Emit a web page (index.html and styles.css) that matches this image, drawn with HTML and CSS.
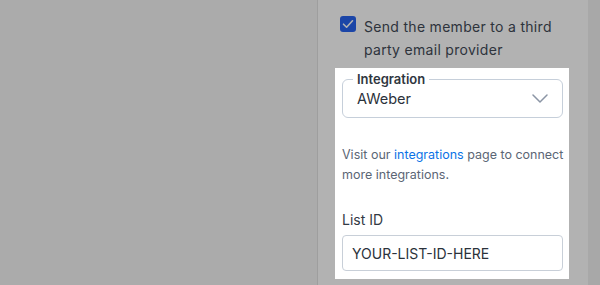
FILE: index.html
```html
<!DOCTYPE html>
<html>
<head>
<meta charset="utf-8">
<link rel="stylesheet" href="styles.css">
</head>
<body>
<div class="page">
  <div class="main"></div>
  <aside class="panel">
    <label class="check-row">
      <span class="checkbox">
        <svg width="12" height="10" viewBox="0 0 12 10"><path d="M1.5 5.2 L4.6 8.2 L10.5 1.8" fill="none" stroke="#fff" stroke-width="1.6" stroke-linecap="round" stroke-linejoin="round"/></svg>
      </span>
      <span class="check-text">Send the member to a third party email provider</span>
    </label>
    <div class="highlight">
      <fieldset class="select">
        <legend>Integration</legend>
        <div class="select-row">
          <span class="select-value">AWeber</span>
          <svg class="chev" width="16" height="9" viewBox="0 0 16 9"><path d="M1 1 L8 8 L15 1" fill="none" stroke="#8b95a5" stroke-width="1.5" stroke-linecap="round" stroke-linejoin="round"/></svg>
        </div>
      </fieldset>
      <p class="help">Visit our <a href="#">integrations</a> page to connect more integrations.</p>
      <div class="field-label">List ID</div>
      <div class="input">YOUR-LIST-ID-HERE</div>
    </div>
  </aside>
  <div class="scroll"></div>
</div>
</body>
</html>
```

FILE: styles.css
```css
html, body {
  margin: 0;
  padding: 0;
  height: 100%;
  overflow: hidden;
}
body {
  font-family: Inter, "Noto Sans", sans-serif;
  background: #f5f5f5;
}
.page {
  display: flex;
  height: 285px;
  position: relative;
}
.main {
  flex: 1;
  background: #f5f5f5;
}
.panel {
  width: 271px;
  background: #fff;
  border-left: 1px solid #e3e3e3;
  padding: 15px 0 0 0;
  box-sizing: border-box;
}
.scroll {
  width: 12px;
  background: #f1f1f1;
}
.check-row {
  display: flex;
  align-items: flex-start;
  gap: 8px;
  padding: 0 20px 0 22px;
}
.checkbox {
  flex: none;
  width: 16px;
  height: 16px;
  margin-top: 1px;
  border-radius: 3px;
  background: #2864f0;
  display: flex;
  align-items: center;
  justify-content: center;
}
.check-text {
  font-size: 14px;
  letter-spacing: 0.3px;
  line-height: 23px;
  color: #434b57;
}
.highlight {
  position: relative;
  z-index: 1;
  background: #fff;
  margin: 7px 19px 0 17px;
  padding: 3px 6px 8px 7px;
  box-shadow: 0 0 0 2000px rgba(0, 0, 0, 0.3);
}
.select {
  margin: 0;
  padding: 0 14px 8px 14px;
  border: 1px solid #c6cfda;
  border-radius: 6px;
  min-width: 0;
}
.select legend {
  font-size: 13px;
  font-weight: 600;
  line-height: 16px;
  color: #2f3640;
  padding: 0 4px;
  margin-left: -4px;
}
.select-row {
  display: flex;
  align-items: center;
  justify-content: space-between;
  height: 22px;
}
.select-value {
  font-size: 14.5px;
  color: #2b323b;
}
.chev {
  margin-top: 1px;
}
.help {
  margin: 27px -8px 0 0;
  font-size: 12.5px;
  line-height: 20px;
  color: #5b6675;
}
.help a {
  color: #0b72e6;
  text-decoration: none;
}
.field-label {
  margin-top: 25px;
  font-size: 14px;
  line-height: 20px;
  color: #333a44;
}
.input {
  margin-top: 5px;
  height: 36px;
  box-sizing: border-box;
  border: 1px solid #c8cfd8;
  border-radius: 4px;
  padding: 0 9px;
  display: flex;
  align-items: center;
  font-size: 14px;
  color: #2b323b;
}
```
